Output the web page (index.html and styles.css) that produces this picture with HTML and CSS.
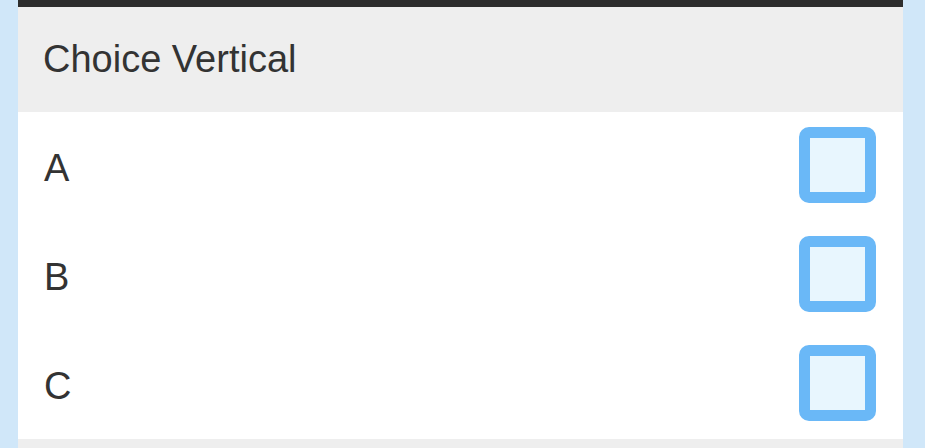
FILE: index.html
```html
<!DOCTYPE html>
<html lang="en">
<head>
    <meta charset="UTF-8">
    <meta name="viewport" content="width=device-width, initial-scale=1.0">
    <title>Choice Vertical</title>
    <link rel="stylesheet" href="styles.css">
</head>
<body>
    <div class="panel">
        <div class="top-bar"></div>
        <div class="panel-header">Choice Vertical</div>

        <div class="choice-list">
            <label class="choice-item">
                <span class="choice-label">A</span>
                <span class="choice-box"></span>
            </label>
            <label class="choice-item">
                <span class="choice-label">B</span>
                <span class="choice-box"></span>
            </label>
            <label class="choice-item">
                <span class="choice-label">C</span>
                <span class="choice-box"></span>
            </label>
        </div>

        <div class="panel-footer"></div>
    </div>
</body>
</html>
```
FILE: styles.css
```css
/* General page styling */
body {
    font-family: "Liberation Sans", Arial, sans-serif;
    background-color: #d0e7f9; /* Light blue background */
    margin: 0;
    padding: 0 22px 0 18px;
}

/* Main panel */
.panel {
    background-color: #ffffff;
    color: #333;
}

.top-bar {
    height: 7px;
    background-color: #2d2d2d;
}

.panel-header {
    height: 105px;
    background-color: #eeeeee;
    padding-left: 25px;
    display: flex;
    align-items: center;
    font-size: 38px;
}

/* Each choice row */
.choice-item {
    height: 109px;
    display: flex;
    justify-content: space-between;
    align-items: center;
    padding: 0 27px 0 26px;
}

.choice-label {
    font-size: 38px;
    padding-top: 3px;
}

/* Unchecked checkbox */
.choice-box {
    width: 55px;
    height: 54px;
    border: 11px solid #6ab8f7;
    border-radius: 10px;
    background-color: #e8f6fe;
    margin-bottom: 4px;
}

.panel-footer {
    height: 20px;
    background-color: #eeeeee;
}
```
